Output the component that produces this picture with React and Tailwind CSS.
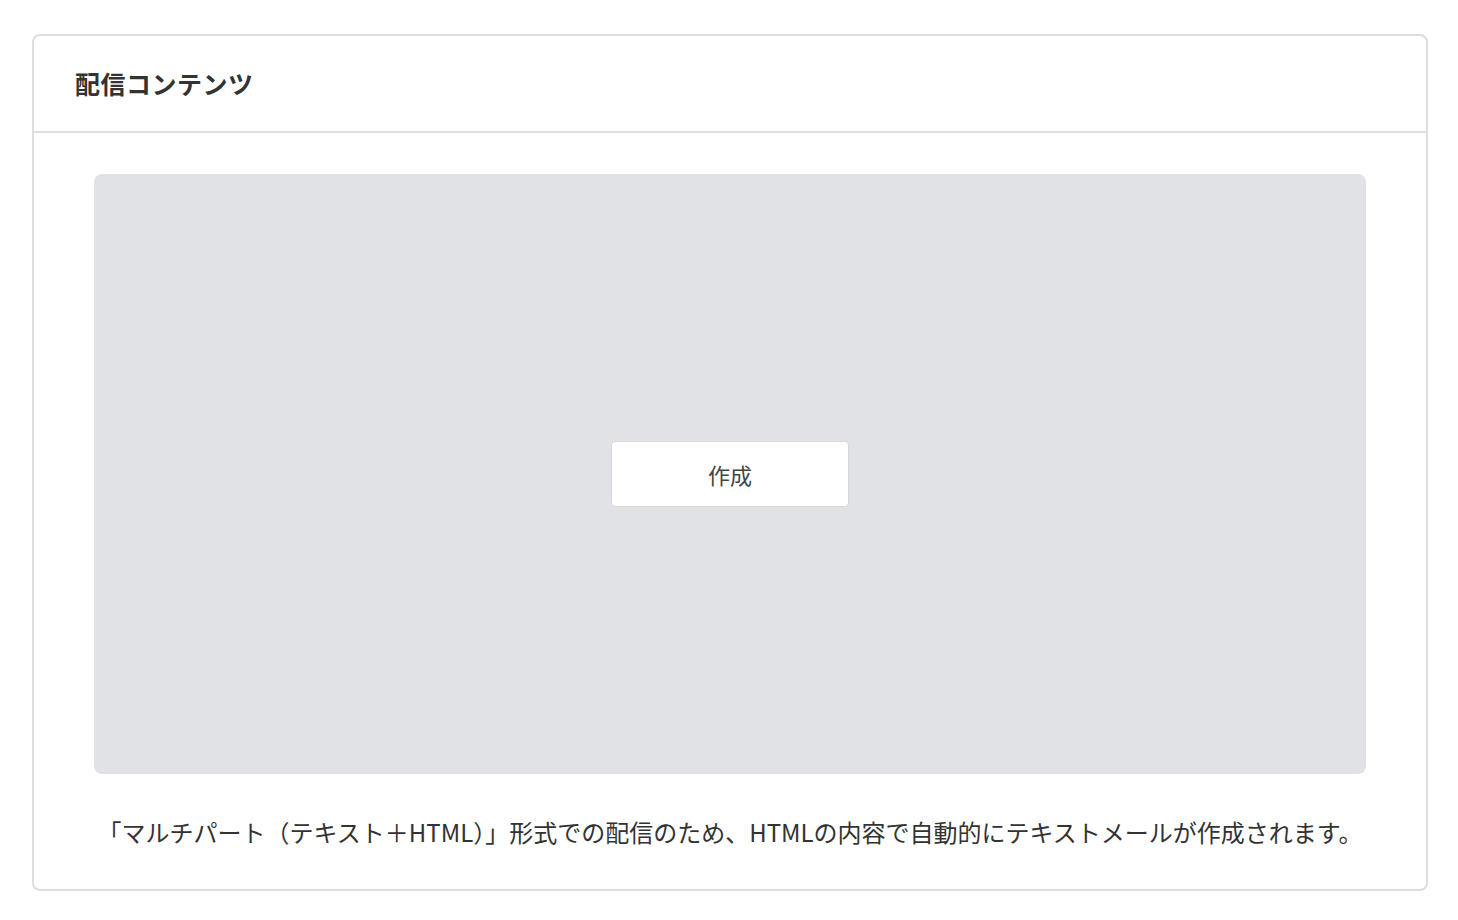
const App = () => {
  return (
    <div
      className="min-h-screen bg-white pt-[34px] pl-[32px] pr-[30px]"
      style={{ fontFamily: '"Noto Sans CJK JP", "Noto Sans", sans-serif' }}
    >
      <section className="border-2 border-[#dedede] rounded-[8px] bg-white">
        {/* Header */}
        <header className="h-[97px] flex items-center px-[41px] border-b-2 border-[#dedede]">
          <h2 className="text-[25px] tracking-[0.5px] font-bold text-[#333]">配信コンテンツ</h2>
        </header>

        {/* Body */}
        <div className="px-[60px] pt-[41px] pb-[37px]">
          <div className="h-[600px] bg-[#e1e2e6] rounded-[8px] flex items-center justify-center">
            <button className="w-[238px] h-[66px] bg-white border border-[#d8d8d8] rounded-[4px] text-[22px] text-[#444]">
              作成
            </button>
          </div>
          <p className="mt-[38px] text-center text-[24px] leading-[40px] text-[#333]">
            「マルチパート（テキスト＋HTML）」形式での配信のため、HTMLの内容で自動的にテキストメールが作成されます。
          </p>
        </div>
      </section>
    </div>
  );
};

export default App;
